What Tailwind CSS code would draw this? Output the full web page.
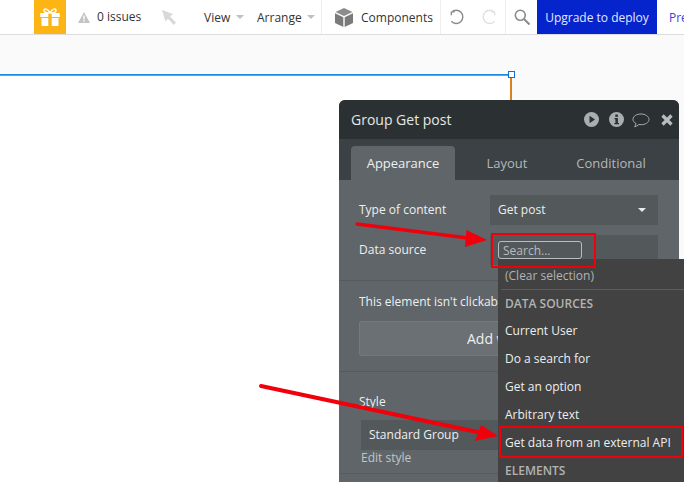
<!DOCTYPE html>
<html><head><meta charset="utf-8"><script src="https://cdn.jsdelivr.net/npm/@tailwindcss/browser@4"></script></head>
<body class="m-0">
<div class="relative w-[684px] h-[482px] overflow-hidden bg-[#fafafa] font-['Open_Sans',sans-serif] text-[12px]">
  <!-- top bar -->
  <div class="flex items-stretch h-[35px] bg-white border-b border-[#dcdcdc] text-[#333] whitespace-nowrap overflow-hidden">
    <div class="w-[34px] shrink-0"></div>
    <div class="w-[32px] shrink-0 bg-[#fdb515] flex items-center justify-center">
      <svg width="22" height="20" viewBox="0 0 22 20"><path d="M2 6h18a.8.8 0 0 1 .8.8V10H1.200V6.800A.8.8 0 0 1 2 6ZM2.500 11h17v7a1 1 0 0 1-1 1h-15a1 1 0 0 1-1-1Z" fill="#fff"/><rect x="9.300" y="6" width="3.400" height="13" fill="#fdb515"/><path d="M11 6C9 1.500 5 1 5 3.500 5 5.500 8 6 11 6ZM11 6c2-4.500 6-5 6-2.500C17 5.500 14 6 11 6Z" fill="none" stroke="#fff" stroke-width="1.500"/></svg>
    </div>
    <div class="flex items-center ml-[12px] w-[12px] shrink-0">
      <svg width="12" height="11" viewBox="0 0 12 11"><path d="M6 0 12 11H0Z" fill="#c4c4c4"/><rect x="5.300" y="3.500" width="1.400" height="4" fill="#fff"/><rect x="5.300" y="8.300" width="1.400" height="1.400" fill="#fff"/></svg>
    </div>
    <span class="ml-[7px] w-[44px] shrink-0 leading-[33px]">0 issues</span>
    <div class="flex items-center ml-[21px] w-[14px] shrink-0">
      <svg width="14" height="15" viewBox="0 0 14 15"><path d="M0 0 11 4 8 6.500 14 12.500 11.800 15 6 8.700 3.500 11.500Z" fill="#d8d8d8"/></svg>
    </div>
    <span class="ml-[28px] w-[26px] shrink-0 leading-[35px]">View</span>
    <div class="flex items-center ml-[6px] w-[7px] shrink-0"><div class="w-0 h-0 border-x-[4px] border-x-transparent border-t-[4px] border-t-[#b9c2c7]"></div></div>
    <span class="ml-[14px] w-[44px] shrink-0 leading-[35px]">Arrange</span>
    <div class="flex items-center ml-[6px] w-[7px] shrink-0"><div class="w-0 h-0 border-x-[4px] border-x-transparent border-t-[4px] border-t-[#b9c2c7]"></div></div>
    <div class="ml-[7px] w-px shrink-0 bg-[#eeeeee]"></div>
    <div class="flex items-center ml-[13px] w-[18px] shrink-0">
      <svg width="18" height="19" viewBox="0 0 18 19"><path d="M9 0 17.500 4 9 8 .5 4Z" fill="#8c8c8c"/><path d="M0 5.300 8.300 9.200V19L0 15Z" fill="#7a7a7a"/><path d="M18 5.300 9.700 9.200V19L18 15Z" fill="#7a7a7a"/></svg>
    </div>
    <span class="ml-[8px] w-[72px] shrink-0 leading-[35px]">Components</span>
    <div class="ml-[7px] w-px shrink-0 bg-[#eeeeee]"></div>
    <div class="flex items-center ml-[8px] w-[16px] shrink-0">
      <svg width="17" height="17" viewBox="0 0 17 17"><path d="M2.500 2.500H6M2.500 2.500V6M2.800 2.800A7 7 0 1 1 2.500 12.500" fill="none" stroke="#8a8a8a" stroke-width="1.500"/></svg>
    </div>
    <div class="flex items-center ml-[16px] w-[16px] shrink-0">
      <svg width="17" height="17" viewBox="0 0 17 17"><path d="M14.500 2.500H11M14.500 2.500V6M14.200 2.800A7 7 0 1 0 14.500 12.500" fill="none" stroke="#e0e0e0" stroke-width="1.500"/></svg>
    </div>
    <div class="ml-[8px] w-px shrink-0 bg-[#eeeeee]"></div>
    <div class="flex items-center ml-[8px] w-[16px] shrink-0">
      <svg width="16" height="16" viewBox="0 0 16 16"><circle cx="6.300" cy="6.300" r="5" fill="none" stroke="#8a8a8a" stroke-width="1.600"/><path d="M10 10 15.500 15.500" stroke="#8a8a8a" stroke-width="2"/></svg>
    </div>
    <div class="ml-[7px] w-[120px] shrink-0 bg-[#0524cc] text-[#e4e8fb] text-center leading-[35px]">Upgrade to deploy</div>
    <span class="ml-[12px] w-[15px] overflow-hidden text-[#3b3fd8] leading-[35px]">Preview</span>
  </div>

  <!-- canvas page -->
  <div class="absolute left-0 top-[74px] w-[512px] h-[408px] bg-white border-t-2 border-r-2 border-t-[#e8821e] border-r-[#d9801f]">
    <div class="absolute left-0 right-0 -top-[2px] h-px bg-[#1a8ae5]"></div>
  </div>
  <div class="absolute left-[508px] top-[71px] w-[7px] h-[7px] bg-white border border-[#0a6fe0]"></div>

  <!-- property palette -->
  <div class="absolute left-[339px] top-[100px] w-[340px] h-[382px] rounded-t-[6px] overflow-hidden bg-[#5f6569] text-[#eef0f0]">
    <div class="flex items-center justify-between h-[39px] bg-[#2b3133] pl-[12px] pr-[6px]">
      <span class="text-[14px] text-[#e6e8e8]">Group Get post</span>
      <div class="flex items-center">
        <svg width="15" height="15" viewBox="0 0 15 15"><circle cx="7.500" cy="7.500" r="7.500" fill="#a9aeb0"/><path d="M5.500 3.800 11 7.500 5.500 11.200Z" fill="#2b3133"/></svg>
        <svg class="ml-[10px]" width="15" height="15" viewBox="0 0 15 15"><circle cx="7.500" cy="7.500" r="7.500" fill="#a9aeb0"/><rect x="6.300" y="2.500" width="2.600" height="2.400" fill="#2b3133"/><path d="M5.500 6h3.400v5H10v1.300H5.400V11h1V7.200h-.9Z" fill="#2b3133"/></svg>
        <svg class="ml-[8px] mt-[2px]" width="18" height="15" viewBox="0 0 18 15"><path d="M9 1C4.500 1 1 3.200 1 6.300c0 1.800 1.200 3.300 3 4.200-.2 1.300-.8 2.300-1.500 3.200 1.800-.3 3.200-1.100 4.300-2.200.7.100 1.400.2 2.200.2 4.500 0 8-2.300 8-5.200S13.500 1 9 1Z" fill="none" stroke="#a9aeb0"/></svg>
        <svg class="ml-[11px]" width="12" height="12" viewBox="0 0 12 12"><path d="M1.500 1.500 10.500 10.500M10.500 1.500 1.500 10.500" stroke="#b9bdbf" stroke-width="3.200"/></svg>
      </div>
    </div>
    <div class="flex h-[41px] items-end bg-[#3b4144] pl-[12px] text-[13px] text-[#b4b8ba]">
      <div class="w-[104px] h-[34px] rounded-t-[4px] bg-[#5f6569] text-[#eef0f0] text-center leading-[35px]">Appearance</div>
      <div class="w-[104px] h-[34px] text-center leading-[35px]">Layout</div>
      <div class="w-[104px] h-[34px] text-center leading-[35px]">Conditional</div>
    </div>
    <div class="flex flex-col">
      <div class="flex flex-col gap-[10px] pt-[15px] pb-[10px] pl-[20px] pr-[21px] h-[101px] border-b border-[#565b5e]">
        <div class="flex items-center justify-between h-[30px]">
          <span>Type of content</span>
          <div class="flex items-center justify-between w-[168px] h-[30px] bg-[#53585b] pl-[8px] pr-[12px] text-[#eceeee]">
            <span>Get post</span>
            <div class="w-0 h-0 border-x-[4px] border-x-transparent border-t-[4px] border-t-[#e8eaea]"></div>
          </div>
        </div>
        <div class="flex items-center justify-between h-[30px]">
          <span>Data source</span>
          <div class="w-[168px] h-[30px] bg-[#53585b]"></div>
        </div>
      </div>
      <div class="pl-[20px] pt-[12px] h-[91px] border-b border-[#565b5e]">
        <div class="w-[139px] overflow-hidden leading-[17px] whitespace-nowrap">This element isn't clickable</div>
        <div class="mt-[11px] w-[300px] h-[35px] bg-[#6b7074] border border-[#75797c] rounded-[2px] text-[14px] leading-[33px] pl-[107px]"><span class="block w-[31px] overflow-hidden whitespace-nowrap">Add workflow</span></div>
      </div>
      <div class="pl-[20px] pt-[21px] h-[102px] border-b border-[#565b5e]">
        <div class="leading-[17px]">Style</div>
        <div class="mt-[10px] ml-[2px] w-[297px] h-[30px] bg-[#53585b] pl-[8px] leading-[30px]">Standard Group</div>
        <div class="ml-[2px] text-[#c2c6c8] leading-[16px]">Edit style</div>
      </div>
    </div>
  </div>

  <!-- dropdown -->
  <div class="absolute left-[498px] top-[241px] w-[186px] h-[241px] whitespace-nowrap text-[#eceeee]">
    <div class="w-[84px] h-[18px] rounded-[3px] border border-[#b9bdbf] bg-[#53585b] pl-[4px] text-[#b7bbbd] leading-[18px]">Search...</div>
    <div class="h-[223px] bg-[#424242] pl-[7px]">
      <div class="h-[31px] -ml-[4px] pl-[4px] border-b border-[#5d5d5d] leading-[33px] text-[#b3b3b3]">(Clear selection)</div>
      <div class="h-[26px] leading-[27px] font-semibold text-[#b3b3b3]">DATA SOURCES</div>
      <div class="h-[28px] leading-[28px] mt-[1px]">Current User</div>
      <div class="h-[28px] leading-[28px]">Do a search for</div>
      <div class="h-[28px] leading-[28px]">Get an option</div>
      <div class="h-[28px] leading-[28px]">Arbitrary text</div>
      <div class="h-[28px] leading-[28px]">Get data from an external API</div>
      <div class="h-[28px] leading-[28px] font-semibold text-[#b3b3b3]">ELEMENTS</div>
    </div>
  </div>

  <!-- annotations -->
  <div class="absolute left-[491px] top-[233px] w-[105px] h-[35px] border-2 border-[#f0000a]"></div>
  <div class="absolute left-[499px] top-[426px] w-[184px] h-[32px] border-2 border-[#f0000a]"></div>
  <svg class="absolute left-0 top-0" width="684" height="482" viewBox="0 0 684 482">
    <path d="M357 224 472 238.500" stroke="#f0000a" stroke-width="3.500" stroke-linecap="round"/>
    <path d="M487 240 466.500 230 465 247Z" fill="#f0000a"/>
    <path d="M261 386 482 433" stroke="#f0000a" stroke-width="4" stroke-linecap="round"/>
    <path d="M498 436 481 425 475 441Z" fill="#f0000a"/>
  </svg>
</div>
</body></html>
